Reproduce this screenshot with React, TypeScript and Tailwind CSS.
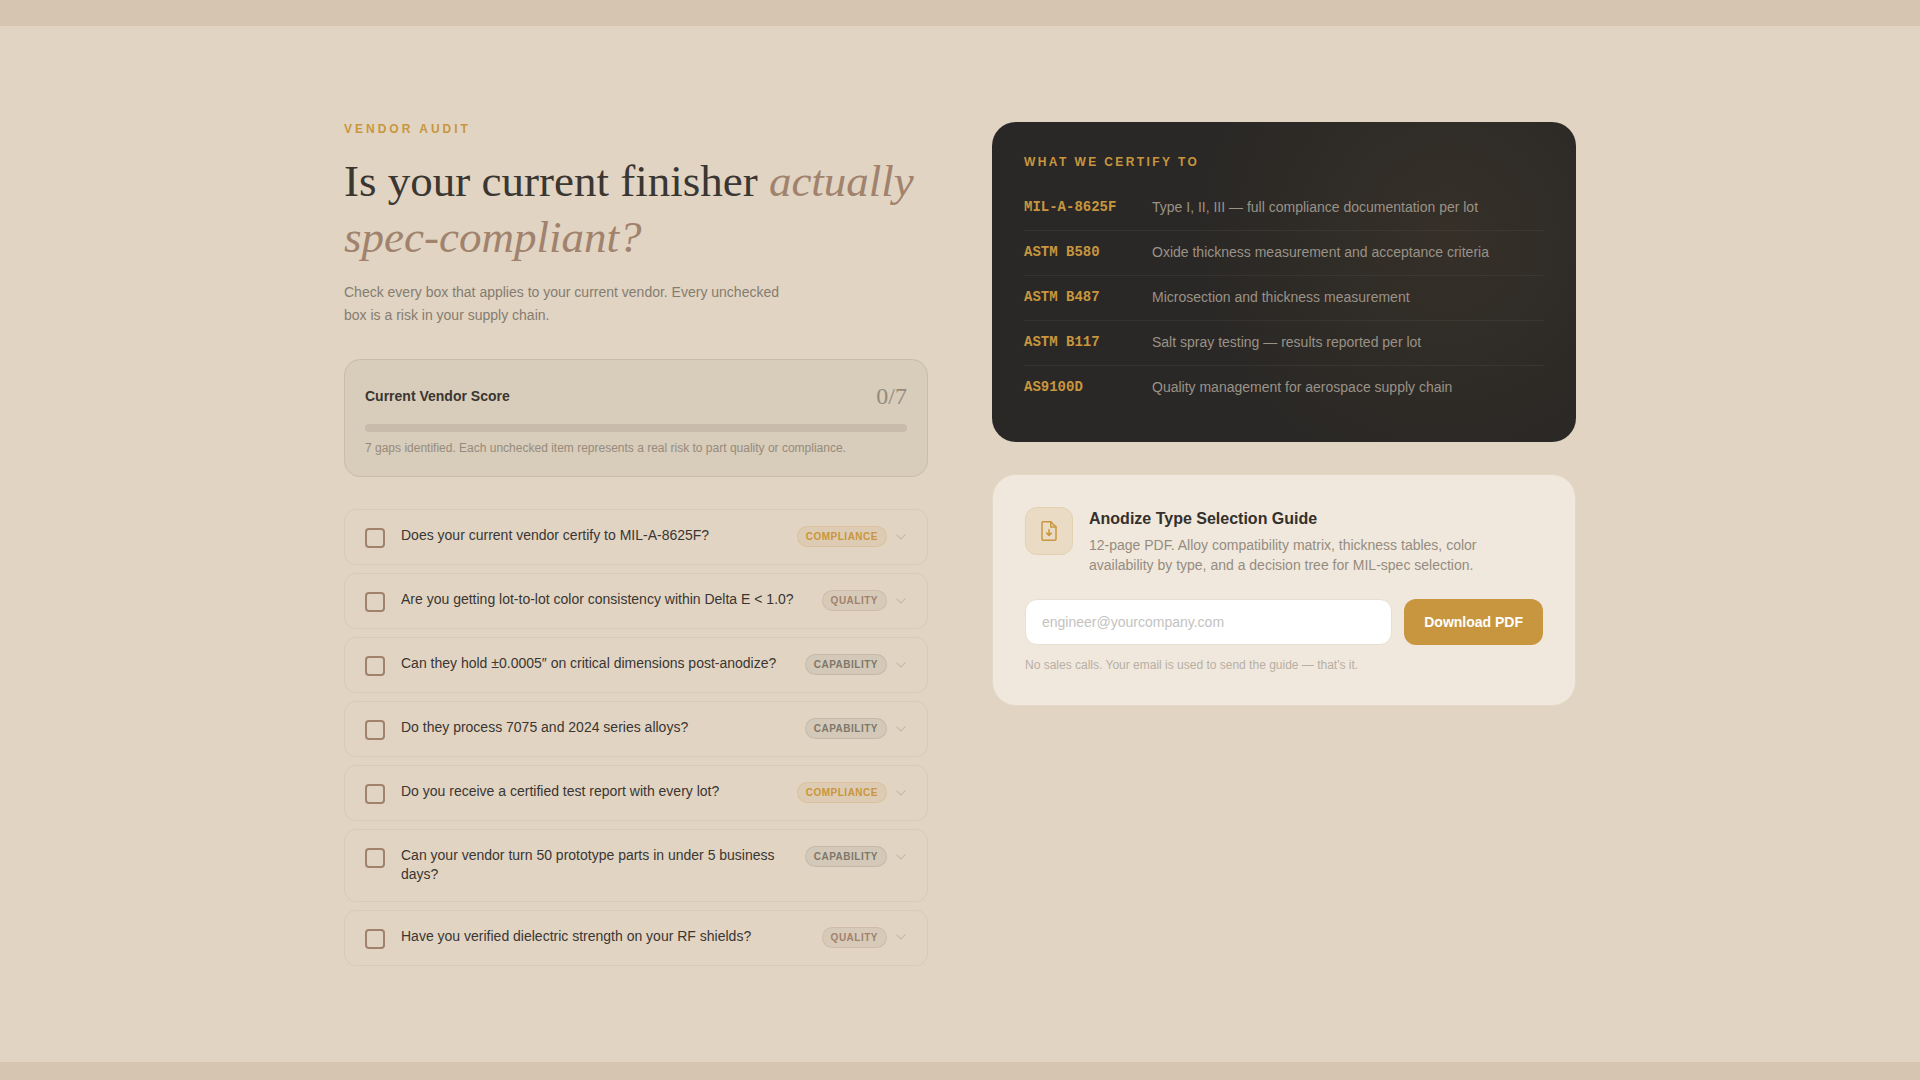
import { useState } from 'react';

type Tag = 'COMPLIANCE' | 'QUALITY' | 'CAPABILITY';

const tagStyles: Record<Tag, string> = {
  COMPLIANCE: 'border-[#c8963e]/20 bg-[#c8963e]/12 text-[#c8963e]',
  QUALITY: 'border-[#a0826d]/20 bg-[#a0826d]/12 text-[#a0826d]',
  CAPABILITY: 'border-[#7d7869]/20 bg-[#7d7869]/12 text-[#7d7869]',
};

const questions: { text: string; tag: Tag }[] = [
  { text: 'Does your current vendor certify to MIL-A-8625F?', tag: 'COMPLIANCE' },
  { text: 'Are you getting lot-to-lot color consistency within Delta E < 1.0?', tag: 'QUALITY' },
  { text: 'Can they hold ±0.0005″ on critical dimensions post-anodize?', tag: 'CAPABILITY' },
  { text: 'Do they process 7075 and 2024 series alloys?', tag: 'CAPABILITY' },
  { text: 'Do you receive a certified test report with every lot?', tag: 'COMPLIANCE' },
  { text: 'Can your vendor turn 50 prototype parts in under 5 business days?', tag: 'CAPABILITY' },
  { text: 'Have you verified dielectric strength on your RF shields?', tag: 'QUALITY' },
];

const standards = [
  ['MIL-A-8625F', 'Type I, II, III — full compliance documentation per lot'],
  ['ASTM B580', 'Oxide thickness measurement and acceptance criteria'],
  ['ASTM B487', 'Microsection and thickness measurement'],
  ['ASTM B117', 'Salt spray testing — results reported per lot'],
  ['AS9100D', 'Quality management for aerospace supply chain'],
];

function Chevron() {
  return (
    <svg className="size-3" viewBox="0 0 12 12" fill="none" stroke="currentColor" strokeWidth="1.2" strokeLinecap="round" strokeLinejoin="round" aria-hidden="true">
      <path d="M2 4l4 4 4-4" />
    </svg>
  );
}

function FileDownIcon() {
  return (
    <svg className="size-[22px]" viewBox="0 0 22 22" fill="none" stroke="currentColor" strokeWidth="1.5" strokeLinecap="round" strokeLinejoin="round" aria-hidden="true">
      <path d="M12.8 1.8H5a1 1 0 0 0-1 1v16.4a1 1 0 0 0 1 1h12a1 1 0 0 0 1-1V7z" />
      <path d="M12.8 1.8V7H18" />
      <path d="M11 9.8v5.6M8.7 13.1l2.3 2.3 2.3-2.3" />
    </svg>
  );
}

function Question({ text, tag, checked, onToggle }: { text: string; tag: Tag; checked: boolean; onToggle: () => void }) {
  const [open, setOpen] = useState(false);
  return (
    <li className="flex items-start gap-4 rounded-xl border border-[#d8cab7] px-5 py-4">
      <label className="flex min-w-0 flex-1 items-start gap-4">
        <input
          type="checkbox"
          checked={checked}
          onChange={onToggle}
          className="mt-0.5 size-5 shrink-0 appearance-none rounded-sm border-2 border-[#a0826d] checked:bg-[#a0826d]"
        />
        <span className="text-sm leading-snug text-[#3a3632]">{text}</span>
      </label>
      <div className="flex shrink-0 items-center gap-2">
        <span className={`rounded-full border px-2 py-0.5 text-[10px] leading-[15px] font-bold tracking-wider ${tagStyles[tag]}`}>{tag}</span>
        <button type="button" aria-label={`Details: ${text}`} aria-expanded={open} onClick={() => setOpen(!open)} className="text-[#cabba9]">
          <Chevron />
        </button>
      </div>
    </li>
  );
}

export default function App() {
  const [checked, setChecked] = useState<boolean[]>(questions.map(() => false));
  const score = checked.filter(Boolean).length;
  const gaps = questions.length - score;

  return (
    <div className="flex min-h-screen flex-col bg-[#d6c5b0] font-['Liberation_Sans',sans-serif]">
      <div className="h-[26px] shrink-0" />
      <main className="bg-[#e1d4c3] py-24">
        <div className="mx-auto grid max-w-7xl grid-cols-1 items-start gap-16 px-6 lg:grid-cols-2">
          <section>
            <p className="mb-4 text-xs leading-[15px] font-bold tracking-[0.25em] text-[#c8963e]">VENDOR AUDIT</p>
            <h2 className="mb-4 font-['Liberation_Serif',serif] text-[45px] leading-[56px] text-[#3a3632]">
              Is your current finisher <em className="text-[#a0826d]">actually spec-compliant?</em>
            </h2>
            <p className="mb-8 max-w-md text-sm leading-[23px] text-[#857c70]">
              Check every box that applies to your current vendor. Every unchecked box is a risk in your supply chain.
            </p>

            <div className="mb-8 rounded-2xl border border-[#c9bcaa] bg-[#d8ccba] p-5">
              <div className="mb-3 flex items-center justify-between">
                <span className="text-sm font-bold text-[#3a3632]">Current Vendor Score</span>
                <span className="font-['Liberation_Serif',serif] text-2xl text-[#968b7d]">
                  {score}/{questions.length}
                </span>
              </div>
              <div className="h-2 overflow-hidden rounded-full bg-[#c8bbab]">
                <div className="h-full bg-[#c8963e]" style={{ width: `${(score / questions.length) * 100}%` }} />
              </div>
              <p className="mt-2 text-xs text-[#968b7d]">
                {gaps} gaps identified. Each unchecked item represents a real risk to part quality or compliance.
              </p>
            </div>

            <ul className="flex flex-col gap-2">
              {questions.map((q, i) => (
                <Question
                  key={q.text}
                  text={q.text}
                  tag={q.tag}
                  checked={checked[i]}
                  onToggle={() => setChecked(checked.map((c, j) => (j === i ? !c : c)))}
                />
              ))}
            </ul>
          </section>

          <aside className="flex flex-col gap-8">
            <section className="rounded-3xl bg-[#2a2826] bg-[radial-gradient(circle_at_78%_35%,rgba(200,150,62,0.07),transparent_50%)] p-8">
              <h3 className="mb-4 text-xs font-bold tracking-[0.2em] text-[#c8963e]">WHAT WE CERTIFY TO</h3>
              <dl className="divide-y divide-white/5">
                {standards.map(([code, description]) => (
                  <div key={code} className="flex gap-4 pt-3 pb-[13px] text-sm leading-[19px]">
                    <dt className="w-28 shrink-0 font-['Liberation_Mono',monospace] font-bold text-[#c8963e]">{code}</dt>
                    <dd className="text-[#9a9287]">{description}</dd>
                  </div>
                ))}
              </dl>
            </section>

            <section className="rounded-3xl border border-[#e4d9c9] bg-[#f0e8dc] p-8">
              <div className="mb-6 flex items-start gap-4">
                <div className="flex size-12 shrink-0 items-center justify-center rounded-xl border border-[#e3d0b0] bg-[#eadcc4] text-[#c8963e]">
                  <FileDownIcon />
                </div>
                <div>
                  <h3 className="mb-1 text-base font-bold text-[#33302d]">Anodize Type Selection Guide</h3>
                  <p className="max-w-[420px] text-sm text-[#958c81]">
                    12-page PDF. Alloy compatibility matrix, thickness tables, color availability by type, and a decision tree for MIL-spec selection.
                  </p>
                </div>
              </div>
              <form className="flex gap-3" onSubmit={(e) => e.preventDefault()}>
                <input
                  type="email"
                  aria-label="Email address"
                  placeholder="engineer@yourcompany.com"
                  className="min-w-0 flex-1 rounded-xl border border-[#e8dfd1] bg-white px-4 py-3 text-sm text-[#3a3632] placeholder:text-[#c4c2c0]"
                />
                <button type="submit" className="rounded-xl bg-[#c8963e] px-5 text-sm font-bold text-white">
                  Download PDF
                </button>
              </form>
              <p className="mt-3 text-xs text-[#b8afa4]">No sales calls. Your email is used to send the guide — that's it.</p>
            </section>
          </aside>
        </div>
      </main>
    </div>
  );
}
